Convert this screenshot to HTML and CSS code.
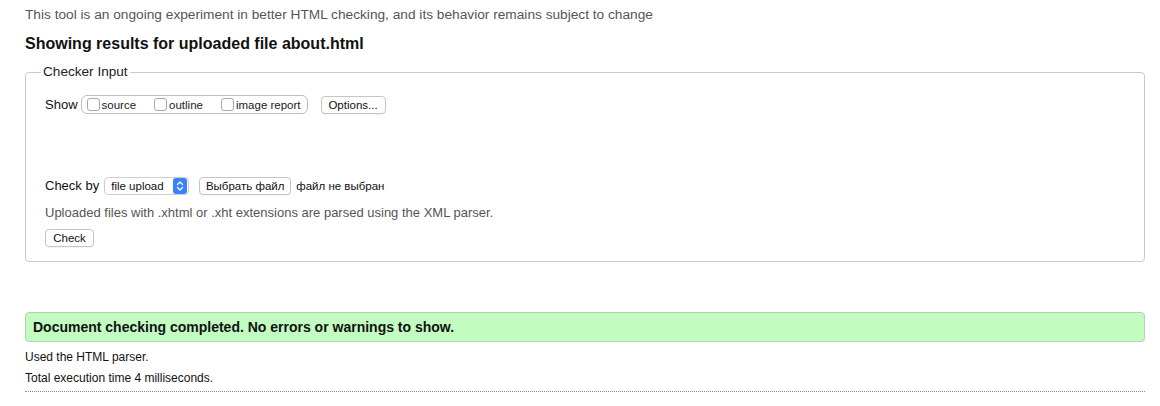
FILE: index.html
```html
<!DOCTYPE html>
<html lang="en">
<head>
<meta charset="utf-8">
<title>Checker results</title>
<link rel="stylesheet" href="styles.css">
</head>
<body>
<p class="note">This tool is an ongoing experiment in better HTML checking, and its behavior remains subject to change</p>
<h2 class="title">Showing results for uploaded file about.html</h2>
<fieldset class="input-box">
  <legend class="legend">Checker Input</legend>
  <div class="row row-show">
    <span class="label">Show</span>
    <span class="check-group">
      <label class="opt"><span class="cb"></span>source</label>
      <label class="opt"><span class="cb"></span>outline</label>
      <label class="opt"><span class="cb"></span>image report</label>
    </span>
    <span class="btn btn-options">Options...</span>
  </div>
  <div class="row row-by">
    <span class="label">Check by</span>
    <span class="select">
      <span class="select-text">file upload</span>
      <span class="select-arrow">
        <svg width="8" height="12" viewBox="0 0 8 12"><path d="M1.5 4.5 L4 2 L6.5 4.5 M1.5 7.5 L4 10 L6.5 7.5" fill="none" stroke="#fff" stroke-width="1.3" stroke-linecap="round" stroke-linejoin="round"/></svg>
      </span>
    </span>
    <span class="btn btn-file">Выбрать файл</span>
    <span class="file-none">файл не выбран</span>
  </div>
  <p class="hint">Uploaded files with .xhtml or .xht extensions are parsed using the XML parser.</p>
  <div class="row row-check"><span class="btn btn-check">Check</span></div>
</fieldset>
<div class="success">Document checking completed. No errors or warnings to show.</div>
<p class="meta meta-first">Used the HTML parser.</p>
<p class="meta meta-last">Total execution time 4 milliseconds.</p>
</body>
</html>
```
FILE: styles.css
```css
html, body {
  background: #ffffff;
}
body {
  margin: 0;
  padding: 0 15px 0 25px;
  font-family: "Liberation Sans", Arial, Helvetica, sans-serif;
  color: #111;
}
.note {
  margin: 0;
  padding-top: 7px;
  font-size: 13.7px;
  line-height: 16px;
  color: #555;
}
.title {
  margin: 12px 0 0 0;
  font-size: 16px;
  line-height: 18px;
  font-weight: bold;
  color: #111;
}
.input-box {
  margin: 11px 0 0 0;
  border: 1px solid #c9c9c9;
  border-radius: 4px;
  padding: 15px 19px 14px 19px;
  min-width: 0;
}
.legend {
  margin-left: -4px;
  padding: 0 2px;
  font-size: 13.6px;
  line-height: 16px;
  color: #222;
}
.row {
  display: flex;
  align-items: center;
}
.label {
  font-size: 13px;
  line-height: 16px;
  color: #111;
}
.row-show .label {
  margin-right: 3px;
}
.check-group {
  display: flex;
  align-items: center;
  height: 17px;
  border: 1px solid #bdbdbd;
  border-radius: 6px;
  padding: 0 6px 0 5px;
}
.opt {
  display: flex;
  align-items: center;
  font-size: 11.5px;
  line-height: 14px;
  color: #222;
  margin-right: 18px;
}
.opt:last-child {
  margin-right: 0;
}
.cb {
  display: inline-block;
  width: 11px;
  height: 11px;
  border: 1px solid #a8a8a8;
  border-radius: 3px;
  background: #fff;
  margin-right: 2px;
}
.btn {
  display: inline-flex;
  align-items: center;
  justify-content: center;
  box-sizing: border-box;
  height: 18px;
  border: 1px solid #c6c6c6;
  border-radius: 4px;
  background: #fff;
  font-size: 11.5px;
  color: #111;
  box-shadow: 0 0.5px 0.5px rgba(0,0,0,0.08);
}
.btn-options {
  margin-left: 13px;
  width: 65px;
}
.row-by {
  margin-top: 63px;
}
.row-by .label {
  margin-right: 5px;
}
.select {
  display: inline-flex;
  align-items: center;
  box-sizing: border-box;
  width: 85px;
  height: 18px;
  border: 1px solid #cfcfcf;
  border-radius: 4px;
  background: #fff;
  padding: 0 1px 0 6px;
}
.select-text {
  flex: 1;
  font-size: 11.5px;
  color: #111;
}
.select-arrow {
  display: inline-flex;
  align-items: center;
  justify-content: center;
  width: 14px;
  height: 16px;
  border-radius: 3px;
  background: #3a82f7;
}
.btn-file {
  margin-left: 10px;
  width: 92px;
}
.file-none {
  margin-left: 5px;
  font-size: 11.5px;
  color: #111;
}
.hint {
  margin: 10px 0 0 0;
  font-size: 13px;
  line-height: 15px;
  color: #555;
}
.row-check {
  margin-top: 9px;
}
.btn-check {
  width: 49px;
}
.success {
  margin-top: 50px;
  box-sizing: border-box;
  height: 30px;
  display: flex;
  align-items: center;
  padding-left: 7px;
  background: #c2fcc1;
  border: 1px solid #b3d4b2;
  border-radius: 4px;
  font-size: 14px;
  font-weight: bold;
  color: #111;
}
.meta {
  margin: 0;
  font-size: 12px;
  line-height: 14px;
  color: #111;
}
.meta-first {
  margin-top: 8px;
}
.meta-last {
  margin-top: 7px;
  padding-bottom: 6px;
  border-bottom: 1px dotted #8a8a8a;
}
```
